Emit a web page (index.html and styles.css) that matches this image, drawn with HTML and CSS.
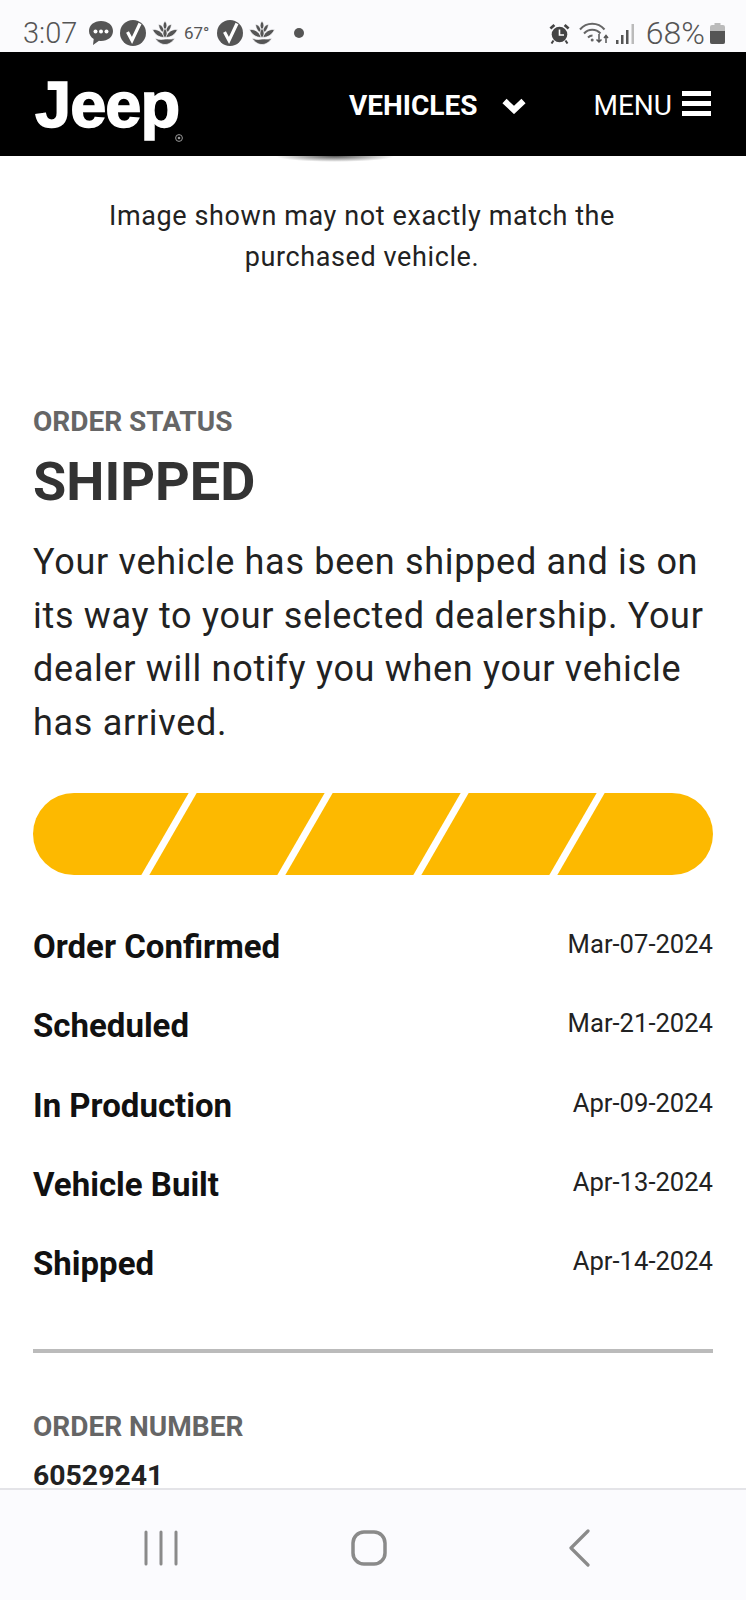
FILE: index.html
```html
<!DOCTYPE html>
<html lang="en">
<head>
    <meta charset="UTF-8">
    <meta name="viewport" content="width=device-width, initial-scale=1.0">
    <title>Order Status</title>
    <link rel="stylesheet" href="styles.css">
</head>
<body>
    <svg class="icon-defs" width="0" height="0">
        <symbol id="check" viewBox="0 0 26 26">
            <circle cx="13" cy="13" r="13" fill="#555"/>
            <path d="M7.500 12l4.500 8.500L20 3.500" fill="none" stroke="#fff" stroke-width="3.200"/>
        </symbol>
        <symbol id="lotus" viewBox="0 0 26 24">
            <g fill="#555" stroke="#fbfbfd" stroke-width="0.700">
                <path d="M13 0c2.500 3 2.500 6 0 9-2.500-3-2.500-6 0-9z"/>
                <path d="M6.500 3.500c3 0 5.500 3 6 8.500-3.500-1-5.500-4-6-8.500zM19.500 3.500c-3 0-5.500 3-6 8.500 3.500-1 5.500-4 6-8.500z"/>
                <path d="M.5 8.500c4.500-.5 9.500 1.500 12 8-5.500 0-10-3-12-8zM25.500 8.500c-4.500-.5-9.500 1.500-12 8 5.500 0 10-3 12-8z"/>
                <path d="M13 7.500c2.700 3 2.700 6.500 0 9.500-2.700-3-2.700-6.500 0-9.500z"/>
                <path d="M3 17c4 2 7 1.500 10 1s6 1 10-1c-3 5-7 6.500-10 6.500S6 22 3 17z"/>
            </g>
        </symbol>
    </svg>

    <div id="app">
        <div class="status-bar">
            <div class="status-left">
                <span class="time">3:07</span>
                <svg class="ic-msg" width="26" height="26" viewBox="0 0 26 26"><path d="M13 1C6 1 1 5.300 1 11c0 3.400 1.800 6.200 4.700 8L5 25l6-4.200c.6.100 1.300.2 2 .2 7 0 12-4.300 12-10S20 1 13 1z" fill="#555"/><circle cx="7.500" cy="11.500" r="2" fill="#fff"/><circle cx="13" cy="11.500" r="2" fill="#fff"/><circle cx="18.500" cy="11.500" r="2" fill="#fff"/></svg>
                <svg width="26" height="26"><use href="#check"/></svg>
                <svg width="26" height="24"><use href="#lotus"/></svg>
                <span class="temp">67°</span>
                <svg width="26" height="26"><use href="#check"/></svg>
                <svg width="26" height="24"><use href="#lotus"/></svg>
                <span class="dot"></span>
            </div>
            <div class="status-right">
                <svg width="21" height="21" viewBox="0 0 21 21"><circle cx="10.500" cy="11.500" r="7.800" fill="#444"/><path d="M10.500 6.500v5.500h4.500" fill="none" stroke="#fff" stroke-width="1.600"/><path d="M0.500 4.500l4-3.500 1.800 2-4 3.500zM20.500 4.500l-4-3.500-1.800 2 4 3.500z" fill="#444"/><path d="M4.500 17.500l-2 3M16.500 17.500l2 3" stroke="#444" stroke-width="2"/></svg>
                <svg class="ic-wifi" width="30" height="22" viewBox="0 0 30 22"><path d="M1 7.500c6.500-7.800 18-7.800 24.500 0M5 11.500c4.500-5 12-5 16.500 0M9 15.500c1.500-1.500 3-2 4.500-2" fill="none" stroke="#666" stroke-width="2"/><circle cx="13.200" cy="18" r="1.500" fill="#666"/><path d="M20 12v8m-2.500-2.500l2.500 2.500 2.500-2.500M27 21v-7m-2 2l2-2.500 2 2.500" fill="none" stroke="#555" stroke-width="1.500"/></svg>
                <svg class="ic-signal" width="20" height="21" viewBox="0 0 20 21"><path d="M1 17h2.500v4H1zM6 12h2.500v9H6zM11 7h2.500v14H11z" fill="#555"/><path d="M16.500 1H19v20h-2.500z" fill="#bbb"/></svg>
                <span class="battery-text">68%</span>
                <svg width="15" height="21" viewBox="0 0 15 21"><path d="M4.500 0h6v2h2.500a2 2 0 0 1 2 2v15a2 2 0 0 1-2 2H2a2 2 0 0 1-2-2V4a2 2 0 0 1 2-2h2.500z" fill="#bbb"/><path d="M0 8h15v11a2 2 0 0 1-2 2H2a2 2 0 0 1-2-2z" fill="#555"/></svg>
            </div>
        </div>

        <header class="site-nav">
            <a class="logo">Jeep
                <svg class="logo-reg" width="8" height="8" viewBox="0 0 8 8"><circle cx="4" cy="4" r="3.400" fill="none" stroke="#999" stroke-width="1"/><circle cx="4" cy="4" r="1.300" fill="#999"/></svg>
            </a>
            <div class="nav-links">
                <a class="nav-vehicles">VEHICLES
                    <svg width="24" height="16" viewBox="0 0 24 16"><path d="M2.500 3l9.500 9L21.500 3" fill="none" stroke="#fff" stroke-width="6"/></svg>
                </a>
                <a class="nav-menu">MENU
                    <span class="burger"><i></i><i></i><i></i></span>
                </a>
            </div>
        </header>

        <main class="content">
            <div class="car-shadow"></div>
            <p class="disclaimer">Image shown may not exactly match the<br>purchased vehicle.</p>

            <section class="order-status">
                <h3 class="label">ORDER STATUS</h3>
                <h1>SHIPPED</h1>
                <p class="lead">Your vehicle has been shipped and is on its way to your selected dealership. Your dealer will notify you when your vehicle has arrived.</p>

                <div class="progress">
                    <span class="segment"></span>
                    <span class="segment"></span>
                    <span class="segment"></span>
                    <span class="segment"></span>
                    <span class="segment"></span>
                </div>

                <ul class="steps">
                    <li><b>Order Confirmed</b><span>Mar-07-2024</span></li>
                    <li><b>Scheduled</b><span>Mar-21-2024</span></li>
                    <li><b>In Production</b><span>Apr-09-2024</span></li>
                    <li><b>Vehicle Built</b><span>Apr-13-2024</span></li>
                    <li><b>Shipped</b><span>Apr-14-2024</span></li>
                </ul>
            </section>

            <hr>

            <h3 class="label">ORDER NUMBER</h3>
            <p class="order-number">60529241</p>
        </main>

        <nav class="android-nav">
            <svg width="36" height="36" viewBox="0 0 36 36"><path d="M3 2v32M18 2v32M33 2v32" fill="none" stroke="#8a8a8a" stroke-width="3" stroke-linecap="round"/></svg>
            <svg width="36" height="36" viewBox="0 0 36 36"><rect x="2" y="2" width="32" height="32" rx="11" fill="none" stroke="#8a8a8a" stroke-width="3.500"/></svg>
            <svg class="nav-back" width="22" height="38" viewBox="0 0 22 38"><path d="M20 2L3 19l17 17" fill="none" stroke="#8a8a8a" stroke-width="3.200" stroke-linecap="round" stroke-linejoin="round"/></svg>
        </nav>
    </div>
</body>
</html>
```

FILE: styles.css
```css
* {
    box-sizing: border-box;
}

body {
    font-family: Roboto, Arial, sans-serif;
    background-color: #fff;
    color: #111;
    margin: 0;
}

.icon-defs {
    position: absolute;
}

#app {
    width: 746px;
    height: 1600px;
    display: flex;
    flex-direction: column;
    overflow: hidden;
}

/* phone status bar */
.status-bar {
    height: 52px;
    flex: none;
    display: flex;
    justify-content: space-between;
    align-items: center;
    padding: 14px 21px 0 23px;
    background: #fbfbfd;
    color: #555;
}

.status-left, .status-right {
    display: flex;
    align-items: center;
}

.time {
    font-size: 29px;
    font-weight: 300;
    width: 65px;
}

.status-left svg {
    margin-right: 6px;
}

.temp {
    font-size: 17px;
    width: 33px;
}

.dot {
    width: 10px;
    height: 10px;
    margin-left: 13px;
    border-radius: 50%;
    background: #555;
}

.ic-wifi {
    margin: 0 6px 0 9px;
}

.battery-text {
    font-size: 32px;
    font-weight: 300;
    margin: 0 5px 0 11px;
}

/* site header */
.site-nav {
    height: 104px;
    flex: none;
    display: flex;
    justify-content: space-between;
    align-items: center;
    padding: 0 35px;
    background: #000;
    color: #fff;
}

.logo {
    position: relative;
    font-family: "Liberation Sans", Arial, sans-serif;
    font-size: 65px;
    font-weight: 700;
    letter-spacing: -1px;
    line-height: 1;
    -webkit-text-stroke: 1.500px #fff;
}

.logo-reg {
    position: absolute;
    left: 140px;
    bottom: -5px;
}

.nav-links {
    display: flex;
    align-items: center;
    gap: 68px;
    font-size: 28px;
    font-weight: 400;
    padding-top: 3px;
}

.nav-vehicles {
    display: flex;
    align-items: center;
    gap: 24px;
    font-weight: 700;
}

.nav-menu {
    display: flex;
    align-items: center;
    gap: 10px;
}

.burger {
    display: flex;
    flex-direction: column;
    gap: 5px;
    width: 29px;
    margin-top: -5px;
}

.burger i {
    height: 5px;
    background: #fff;
}

/* page content */
.content {
    flex: 1;
    min-height: 0;
    overflow: hidden;
    padding: 0 33px;
    background: #fff;
}

.car-shadow {
    width: 120px;
    height: 6px;
    margin-left: 242px;
    border-radius: 0 0 50% 50%;
    background: radial-gradient(ellipse at top, #555, #fff 70%);
}

.disclaimer {
    margin: 34px 22px 0 0;
    text-align: center;
    font-size: 27px;
    line-height: 41px;
    letter-spacing: 0.600px;
    color: #222;
}

.order-status {
    margin-top: 129px;
}

.label {
    margin: 0;
    font-size: 28px;
    line-height: 30px;
    font-weight: 700;
    color: #666;
}

h1 {
    margin: 15px 0 0;
    font-size: 54px;
    line-height: 60px;
    font-weight: 700;
    color: #333;
}

.lead {
    margin: 24px 0 0;
    font-size: 36px;
    line-height: 53.500px;
    letter-spacing: 0.700px;
    color: #222;
}

.progress {
    display: flex;
    height: 82px;
    margin-top: 43px;
    overflow: hidden;
    border-radius: 41px;
    background: #fdb900;
}

.segment {
    flex: 1;
    transform: translateX(-4px) skewX(-30deg);
    border-left: 8px solid #fff;
}

.segment:first-child {
    border-left-color: transparent;
}

.steps {
    list-style: none;
    margin: 53px 0 0;
    padding: 0;
}

.steps li {
    display: flex;
    justify-content: space-between;
    align-items: flex-start;
    height: 79.300px;
}

.steps b {
    font-size: 33px;
    line-height: 38px;
    font-weight: 700;
    color: #111;
}

.steps span {
    font-size: 25.600px;
    line-height: 32px;
    color: #222;
}

hr {
    height: 4px;
    margin: 25px 0 0;
    border: none;
    background: #bbb;
}

.content hr + .label {
    margin-top: 59px;
}

.order-number {
    margin: 18px 0 0;
    font-size: 28.400px;
    line-height: 32px;
    font-weight: 700;
    color: #222;
}

/* phone nav bar */
.android-nav {
    height: 112px;
    flex: none;
    display: flex;
    align-items: center;
    gap: 172px;
    padding: 5px 0 0 143px;
    border-top: 2px solid #e4e4e8;
    background: #fbfbfe;
}

.nav-back {
    margin-left: 9px;
}
```
